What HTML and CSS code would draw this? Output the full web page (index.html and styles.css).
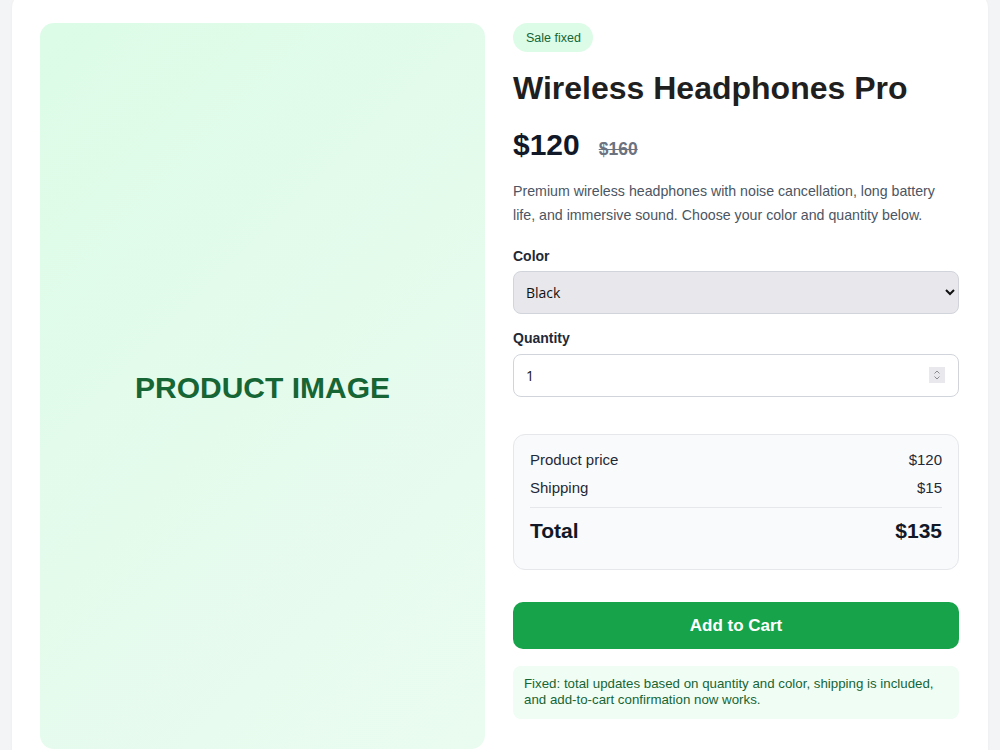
FILE: index.html
```html
<!DOCTYPE html>
<html lang="en">
<head>
<meta charset="utf-8">
<title>Wireless Headphones Pro</title>
<link rel="stylesheet" href="styles.css">
</head>
<body>
<main class="card">
  <div class="image">PRODUCT IMAGE</div>
  <section class="info">
    <span class="badge">Sale fixed</span>
    <h1 class="title">Wireless Headphones Pro</h1>
    <div class="prices">
      <span class="price">$120</span>
      <span class="old">$160</span>
    </div>
    <p class="desc">Premium wireless headphones with noise cancellation, long battery life, and immersive sound. Choose your color and quantity below.</p>
    <label class="label first" for="color">Color</label>
    <select id="color" class="select">
      <option>Black</option>
      <option>White</option>
      <option>Blue</option>
    </select>
    <label class="label" for="qty">Quantity</label>
    <div class="qty">
      <input id="qty" class="input" type="number" value="1" min="1">
      <span class="spin" aria-hidden="true">
        <svg width="16" height="16" viewBox="0 0 16 16"><path d="M5.5 6.5 L8 4 L10.5 6.5 M5.5 9.5 L8 12 L10.5 9.5" fill="none" stroke="#8a8a90" stroke-width="1"/></svg>
      </span>
    </div>
    <div class="summary">
      <div class="row"><span>Product price</span><span>$120</span></div>
      <div class="row"><span>Shipping</span><span>$15</span></div>
      <div class="row total"><span>Total</span><span>$135</span></div>
    </div>
    <button class="cart">Add to Cart</button>
    <div class="note">Fixed: total updates based on quantity and color, shipping is included, and add-to-cart confirmation now works.</div>
  </section>
</main>
</body>
</html>
```
FILE: styles.css
```css
* { box-sizing: border-box; }
html, body { margin: 0; }
body {
  background: #f3f4f6;
  font-family: "Liberation Sans", Arial, sans-serif;
  padding: 0 12px;
  overflow: hidden;
  height: 750px;
}
.card {
  background: #fff;
  border-radius: 16px;
  margin-top: -8px;
  padding: 31px 29px 28px 28px;
  display: grid;
  grid-template-columns: 445px 1fr;
  align-items: start;
  column-gap: 28px;
  box-shadow: 0 1px 3px rgba(0,0,0,0.04);
}
.image {
  height: 726px;
  padding-top: 4px;
  border-radius: 14px;
  background: linear-gradient(135deg, #dcfce7 0%, #e4fbec 50%, #eafcf0 100%);
  display: flex;
  align-items: center;
  justify-content: center;
  color: #166534;
  font-weight: 700;
  font-size: 30px;
}
.info {
  display: flex;
  flex-direction: column;
  align-items: flex-start;
}
.badge {
  background: #dcfce7;
  color: #166534;
  font-size: 12.5px;
  height: 29px;
  line-height: 30px;
  padding: 0 12px 0 13px;
  border-radius: 999px;
}
.title {
  margin: 17px 0 0;
  font-size: 32px;
  line-height: 38px;
  color: #1f1f1f;
  font-weight: 700;
}
.prices {
  margin-top: 20px;
  display: flex;
  align-items: baseline;
  gap: 19px;
}
.price {
  font-size: 30px;
  font-weight: 700;
  color: #111827;
  line-height: 36px;
}
.old {
  font-size: 17.5px;
  font-weight: 700;
  color: #6b7280;
  text-decoration: line-through;
}
.desc {
  margin: 16px 0 0;
  font-size: 14.2px;
  line-height: 24px;
  color: #4b5563;
  max-width: 432px;
}
.label {
  margin-top: 15px;
  font-size: 14px;
  font-weight: 700;
  color: #1f2937;
  line-height: 18px;
}
.label.first { margin-top: 20px; }
.select, .input {
  margin-top: 7px;
  width: 100%;
  height: 43px;
  border: 1px solid #d1d5db;
  border-radius: 8px;
  padding: 0 12px;
  font-size: 14px;
  color: #111;
  font-family: "Open Sans", sans-serif;
}
.select { background: #e8e7ec; margin-top: 6px; padding-left: 8px; }
.qty {
  position: relative;
  width: 100%;
  margin-top: 7px;
}
.input {
  margin-top: 0;
  display: block;
  background: #fff;
  -moz-appearance: textfield;
}
.input::-webkit-inner-spin-button,
.input::-webkit-outer-spin-button { -webkit-appearance: none; margin: 0; }
.spin {
  position: absolute;
  right: 14px;
  top: 13px;
  width: 16px;
  height: 16px;
  background: #e9e9ed;
  display: flex;
  pointer-events: none;
}
.summary {
  margin-top: 37px;
  width: 100%;
  background: #f9fafb;
  border: 1px solid #e5e7eb;
  border-radius: 12px;
  padding: 16px 16px 25px;
}
.row {
  display: flex;
  justify-content: space-between;
  font-size: 15px;
  color: #1f2937;
  line-height: 18px;
}
.row + .row { margin-top: 10px; }
.row.total {
  margin-top: 10px;
  padding-top: 10px;
  border-top: 1px solid #e5e7eb;
  font-size: 21px;
  font-weight: 700;
  color: #111827;
  line-height: 26px;
}
.cart {
  margin-top: 32px;
  width: 100%;
  height: 47px;
  padding-top: 2px;
  border: none;
  border-radius: 10px;
  background: #16a34a;
  color: #fff;
  font-family: "Liberation Sans", Arial, sans-serif;
  font-weight: 700;
  font-size: 17px;
}
.note {
  margin-top: 17px;
  width: 100%;
  background: #f0fdf4;
  color: #166534;
  font-size: 13.3px;
  line-height: 16px;
  border-radius: 8px;
  padding: 10px 11px 11px;
}
```
